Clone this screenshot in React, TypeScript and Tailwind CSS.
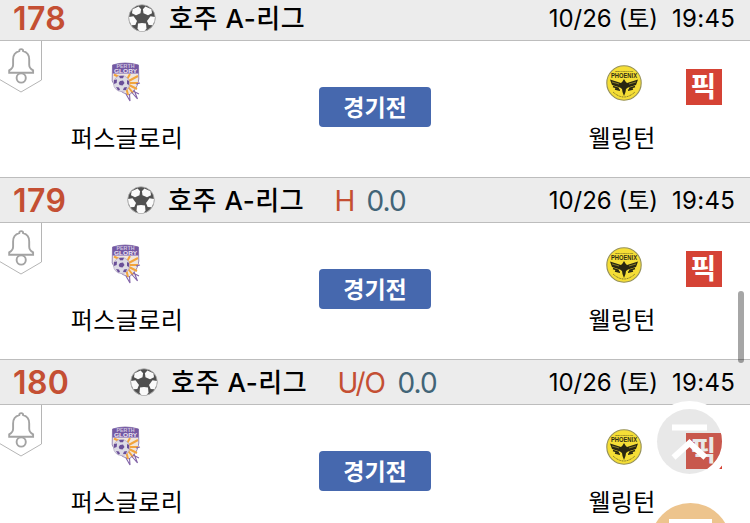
type Match = {
  no: string;
  noClass: string;
  leagueClass: string;
  market?: string;
  line?: string;
  marketClass?: string;
};

const matches: Match[] = [
  { no: '178', noClass: 'w-[115px]', leagueClass: 'mr-[30px]' },
  { no: '179', noClass: 'w-[114px]', leagueClass: 'mr-[30px]', market: 'H', line: '0.0', marketClass: 'w-8' },
  { no: '180', noClass: 'w-[117px]', leagueClass: 'mr-[30px]', market: 'U/O', line: '0.0', marketClass: 'w-[60px] tracking-[-1.1px]' },
];

function SoccerBall() {
  return (
    <svg viewBox="0 0 28 28" className="h-7 w-7 shrink-0">
      <circle cx="14" cy="14" r="13.3" fill="#505050" stroke="#b4b4b4" strokeWidth=".8" />
      <g fill="#fafafa">
        <path d="M4.600 5.200 10.600 2.500 13.100 5.200 12.500 9.300 8 11.200 4 9.200Z" />
        <path d="M23.400 5.200 17.400 2.500 14.900 5.200 15.500 9.300 20 11.200 24 9.200Z" />
        <path d="M1 13 5.500 12.300 9 17 7.300 21 3.400 21.200Q.8 17 1 13Z" />
        <path d="M27 13 22.500 12.300 19 17 20.700 21 24.600 21.200Q27.200 17 27 13Z" />
        <path d="m10 19.600 4-.6 4 .6.500 5.200-2 2.200h-5l-2-2.200Z" />
      </g>
    </svg>
  );
}

function BellTab() {
  return (
    <svg viewBox="0 0 42 53" className="h-[53px] w-[42px] shrink-0" fill="none">
      <path d="M41.5 0V39L21 51 0 38.7" stroke="#b5b5b5" />
      <g stroke="#a3a3a3" strokeWidth="1.9">
        <path d="M19.2 10.2c0-2.800 4-2.800 4 0 4.200 1.100 6 4.200 6 8.300v5.200c0 2.500 1 4 3.900 5.700v2.300H9.200v-2.300c2.900-1.700 3.900-3.200 3.900-5.700v-5.200c0-4.100 1.800-7.200 6.100-8.300Z" />
        <circle cx="21.200" cy="37" r="4.600" />
      </g>
    </svg>
  );
}

function GloryCrest() {
  return (
    <svg viewBox="0 0 30 40" className="mr-0.5 h-10 w-[30px]">
      <path d="M1.500 3Q14 -1 27.500 3L27.800 17Q27 27 18 33 5 29 1.200 19Z" fill="#e8e3ec" stroke="#9a8ab5" strokeWidth="1" />
      <path d="M2.500 12H27V19Q25 28 18 32 8 29 3 21Z" fill="#f0e6dc" />
      <path d="m14 21 5-9m-5 9 13-7m-13 7h13m-13 0 12 6m-12-6 8 10m-8-10 3 12M3 12.500l8 4" stroke="#f2a43c" strokeWidth="2" />
      <path d="m15 32 4 7-.5-7m2-2 6 7-3.500-9m-1 1 6 3m-3-10 4-1" fill="none" stroke="#8264a8" strokeWidth="1.100" />
      <path d="M1.500 3Q14-1 27.500 3V11.500H1.500Z" fill="#7458a3" />
      <text x="14.500" y="6.200" textAnchor="middle" textLength="18" lengthAdjust="spacingAndGlyphs" fill="#cfc5df" className="font-['Liberation_Sans'] text-[4.500px] font-bold">PERTH</text>
      <text x="14.500" y="10.800" textAnchor="middle" textLength="23" lengthAdjust="spacingAndGlyphs" fill="#e9e3f0" className="font-['Liberation_Sans'] text-[5px] font-bold">GLORY</text>
      <circle cx="10.500" cy="21.500" r="8" fill="#dddbe5" stroke="#b3a7c6" strokeWidth=".7" />
      <g fill="#6a4f98">
        <path d="m9 19 3-.5 1.500 2.500-2 2.500-3-.5-.8-2Z" />
        <path d="m8 14 5-.2-1 2.500H9ZM3 18l3-.5-.3 3.500-2.800 1ZM16 18l2 1v4l-2-1ZM5 25l3 .5 1 2.500-2 .5ZM12 28l1-2.500 3-.5-1 3Z" />
      </g>
    </svg>
  );
}

function PhoenixCrest() {
  return (
    <svg viewBox="0 0 36 36" className="ml-0.5 h-9 w-9">
      <circle cx="18" cy="18" r="17.200" fill="#f5de36" stroke="#96915a" strokeWidth="1.100" />
      <text x="18" y="7" textAnchor="middle" textLength="18" lengthAdjust="spacingAndGlyphs" fill="#5b541f" className="font-['Liberation_Sans'] text-[2.500px] font-bold">WELLINGTON</text>
      <text x="18" y="13" textAnchor="middle" textLength="26" lengthAdjust="spacingAndGlyphs" fill="#302d13" className="font-['Liberation_Sans'] text-[6.500px] font-bold">PHOENIX</text>
      <path d="M4 14.500 15 18 16.500 16.500 18 14 19.500 16.500 21 18 32 14.500 30 20 22 22.500 20 24 19.500 27 18 31 16.500 27 16 24 14 22.500 6 20Z" fill="#292712" />
      <path d="m7 21.500 6 2m-4 .5 5 1.200m15-3.700-6 2m4 .5-5 1.200" stroke="#292712" strokeWidth="1.400" />
      <path d="m6 17 7 2m17-2-7 2" stroke="#c8b735" strokeWidth=".6" />
      <path d="M7 27Q18 37 29 27" fill="none" stroke="#6b6426" strokeWidth="1" strokeDasharray="1 .7" />
    </svg>
  );
}

function MatchRow({ match }: { match: Match }) {
  return (
    <article className="h-[182px]">
      <header className="flex h-[46px] items-center border-y border-[#bdbdbd] bg-[#ececec] pl-[13px] pr-[15px] whitespace-nowrap">
        <span className={`${match.noClass} shrink-0 pt-0.5 text-[32px] leading-none font-semibold tracking-[0.4px] text-[#c44f33]`}>{match.no}</span>
        <SoccerBall />
        <span className={`${match.leagueClass} ml-[13px] pt-0.5 text-[26px] leading-none font-medium tracking-[0.6px] text-black`}>호주 A-리그</span>
        {match.market && (
          <>
            <span className={`${match.marketClass} pt-px text-[28px] leading-none font-normal text-[#c44f33]`}>{match.market}</span>
            <span className="pt-px text-[28px] leading-none font-normal tracking-[-0.8px] text-[#426477]">{match.line}</span>
          </>
        )}
        <time className="ml-auto flex gap-[14px] pt-0.5 text-2xl leading-none text-black">
          <span>10/26 (토)</span>
          <span className="tracking-[0.25px]">19:45</span>
        </time>
      </header>
      <div className="flex h-[136px] items-start">
        <BellTab />
        <div className="flex w-[170px] flex-col items-center pt-[21px]">
          <GloryCrest />
          <span className="mt-[25px] text-2xl leading-none tracking-[0.4px] whitespace-nowrap text-black">퍼스글로리</span>
        </div>
        <button className="mt-[46px] ml-[107px] flex h-10 w-28 shrink-0 items-center justify-center rounded bg-[#4668ae] pt-0.5 text-[23px] leading-none font-bold text-white">경기전</button>
        <div className="ml-[144px] flex w-24 flex-col items-center pt-6">
          <PhoenixCrest />
          <span className="mt-[26px] -ml-0.5 text-2xl leading-none tracking-[0.3px] whitespace-nowrap text-black">웰링턴</span>
        </div>
        <span className="mt-7 ml-[15px] flex h-9 w-9 shrink-0 items-center justify-center bg-[#d54335] pr-px text-[28px] leading-none font-bold text-white">픽</span>
      </div>
    </article>
  );
}

export default function App() {
  return (
    <main className="relative h-[523px] w-[750px] overflow-hidden bg-white font-['Inter','Noto_Sans_CJK_KR',sans-serif]">
      <div className="-mt-[5px]">
        {matches.map((match) => <MatchRow key={match.no} match={match} />)}
      </div>
      <div className="absolute top-[291px] left-[738px] h-[72px] w-1.5 rounded-full bg-black/35" />
      <svg viewBox="0 0 84 124" className="absolute top-[399px] left-[648px] h-[124px] w-[84px]" fill="none">
        <circle cx="41.500" cy="42.500" r="36.500" stroke="#fff" strokeWidth="8" />
        <circle cx="41.500" cy="42.500" r="32.500" fill="#9d9d9d" fillOpacity=".235" />
        <path d="M24 28.500H59M25.500 58.500 41.500 44 57.500 58.500" stroke="#fff" strokeWidth="6" />
        <circle cx="42.500" cy="144" r="40" fill="#edc48d" />
        <path d="M21 123H64" stroke="#fff" strokeWidth="6" />
      </svg>
    </main>
  );
}
